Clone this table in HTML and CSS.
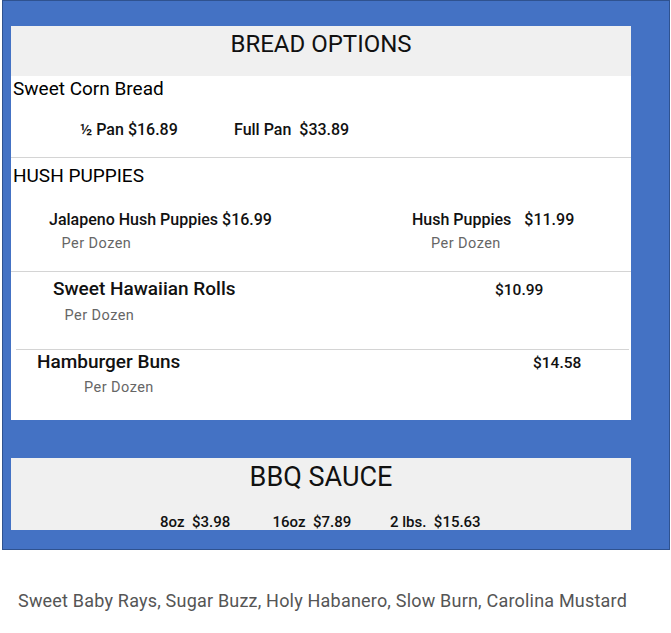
FILE: index.html
```html
<!DOCTYPE html>
<html>
<head>
<meta charset="utf-8">
<link rel="stylesheet" href="styles.css">
</head>
<body>
<div class="frame">
  <section class="panel bread">
    <h1 class="panel-head">BREAD OPTIONS</h1>
    <h2 class="cat cat-corn">Sweet Corn Bread</h2>
    <div class="price-row">
      <span class="half">½ Pan $16.89</span>
      <span class="full">Full Pan  $33.89</span>
    </div>
    <hr class="rule">
    <h2 class="cat cat-hush">HUSH PUPPIES</h2>
    <div class="hush-row">
      <div class="hush-left">
        <div class="hush-name">Jalapeno Hush Puppies $16.99</div>
        <div class="per per-left">Per Dozen</div>
      </div>
      <div class="hush-right">
        <div class="hush-name">Hush Puppies<span class="hush-price">$11.99</span></div>
        <div class="per per-right">Per Dozen</div>
      </div>
    </div>
    <hr class="rule">
    <div class="item item-rolls">
      <div class="item-line">
        <span class="item-name rolls-name">Sweet Hawaiian Rolls</span>
        <span class="item-price">$10.99</span>
      </div>
      <div class="per per-rolls">Per Dozen</div>
    </div>
    <hr class="rule rule-short">
    <div class="item item-buns">
      <div class="item-line">
        <span class="item-name buns-name">Hamburger Buns</span>
        <span class="item-price">$14.58</span>
      </div>
      <div class="per per-buns">Per Dozen</div>
    </div>
  </section>
  <section class="panel bbq">
    <h1 class="bbq-head">BBQ SAUCE</h1>
    <div class="bbq-row">
      <span class="sz sz1">8oz  $3.98</span>
      <span class="sz sz2">16oz  $7.89</span>
      <span class="sz">2 lbs.  $15.63</span>
    </div>
  </section>
</div>
<p class="note">Sweet Baby Rays, Sugar Buzz, Holy Habanero, Slow Burn, Carolina Mustard</p>
</body>
</html>
```
FILE: styles.css
```css
* { box-sizing: border-box; }
html, body { margin: 0; padding: 0; background: #fff; }
body { font-family: Roboto, "Liberation Sans", sans-serif; color: #111; }

.frame {
  margin-left: 2px;
  width: 668px;
  background: #4472c4;
  border: 1px solid #2f528f;
  padding: 25px 38px 19px 8px;
}

.panel { background: #fff; }
.bread { padding-bottom: 23px; }

.panel-head {
  margin: 0;
  background: #f0f0f0;
  height: 50px;
  padding-top: 3px;
  font-size: 24px;
  line-height: 30px;
  font-weight: 400;
  text-align: center;
  color: #111;
}

.cat {
  margin: 0;
  font-weight: 400;
  font-size: 19px;
  line-height: 24px;
  padding-left: 2px;
  color: #000;
}
.cat-corn { margin-top: 1px; }
.cat-hush { margin-top: 6px; }

.price-row {
  display: flex;
  margin-top: 19px;
  padding-left: 69px;
  font-size: 16px;
  line-height: 20px;
  font-weight: 500;
  white-space: pre;
}
.half { width: 154px; }

.rule {
  margin: 17px 0 0;
  border: 0;
  border-top: 1px solid #d4d4d4;
  height: 0;
}
.rule-short { margin-left: 5px; margin-right: 2px; }

.hush-row {
  display: flex;
  margin-top: 22px;
  padding-left: 38px;
}
.hush-left { width: 363px; }
.hush-name {
  font-size: 16px;
  line-height: 20px;
  font-weight: 500;
  white-space: pre;
}
.hush-price { margin-left: 13px; }
.per {
  font-size: 14.5px;
  line-height: 18px;
  color: #666;
  margin-top: 4.5px;
  letter-spacing: 0.45px;
}
.per-left { padding-left: 12.5px; }
.per-right { padding-left: 19px; }

.hush-row + .rule { margin-top: 18.5px; }

.item-line {
  display: flex;
  align-items: baseline;
  line-height: 24px;
}
.item-name {
  font-size: 19px;
  font-weight: 500;
}
.item-price {
  font-size: 15.5px;
  font-weight: 500;
}
.item-rolls { margin-top: 5px; padding-left: 42px; }
.rolls-name { width: 442px; }
.per-rolls { padding-left: 11.5px; margin-top: 5px; }
.item-rolls + .rule { margin-top: 23.5px; }

.item-buns { margin-top: 0; padding-left: 26px; }
.buns-name { width: 496px; }
.per-buns { padding-left: 47px; margin-top: 4px; }

.bbq {
  margin-top: 38px;
  background: #f0f0f0;
  height: 72px;
  overflow: hidden;
}
.bbq-head {
  margin: 0;
  padding-top: 3px;
  font-size: 27px;
  line-height: 32px;
  font-weight: 400;
  text-align: center;
  color: #111;
}
.bbq-row {
  display: flex;
  margin-top: 21px;
  padding-left: 149px;
  font-size: 15px;
  line-height: 16px;
  font-weight: 500;
  white-space: pre;
}
.sz1 { width: 112.5px; }
.sz2 { width: 117.5px; }

.note {
  margin: 41px 0 0;
  padding-left: 18px;
  font-size: 18px;
  line-height: 20px;
  color: #555;
  font-weight: 400;
  letter-spacing: 0.2px;
}
```
